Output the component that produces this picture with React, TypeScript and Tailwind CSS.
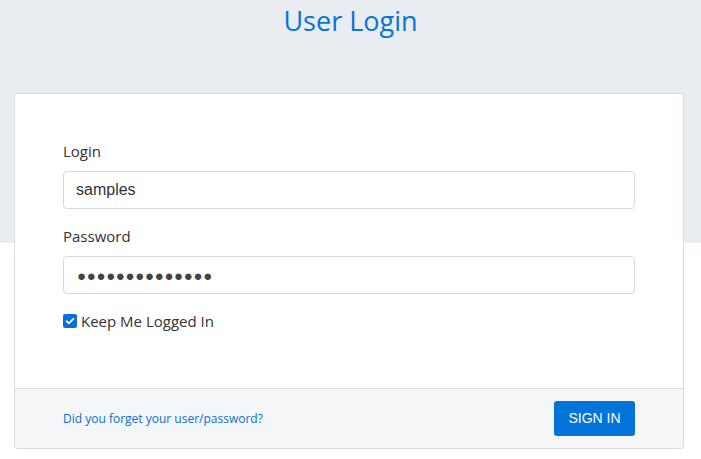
import React from "react";

export default function App() {
  return (
    <div
      className="w-[701px] h-[459px] overflow-hidden bg-[linear-gradient(to_bottom,#e9ecf1_0px,#e9ecf1_243px,#ffffff_243px)]"
      style={{ fontFamily: '"Open Sans", sans-serif' }}
    >
      <h1 className="h-[93px] m-0 text-center text-[27px] leading-[42px] font-medium text-[#0a74da]">
        User Login
      </h1>
      <div className="ml-[14px] w-[670px] h-[356px] flex flex-col bg-white border border-[#d9dde3] rounded-[3px] overflow-hidden">
        <div className="flex-1 px-12 pt-[46px]">
          <div className="mb-[16px]">
            <label className="block text-[15px] leading-[22px] text-[#333] mb-[9px]">Login</label>
            <input
              readOnly
              value="samples"
              className="block w-full h-[38px] px-3 border border-[#d5d8dc] rounded-[4px] text-[16px] text-[#333] outline-none"
              style={{ fontFamily: '"Liberation Sans", Arial, sans-serif' }}
            />
          </div>
          <div className="mb-[16px]">
            <label className="block text-[15px] leading-[22px] text-[#333] mb-[9px]">Password</label>
            <input
              readOnly
              type="text"
              value="●●●●●●●●●●●●●●"
              className="block w-full h-[38px] pl-[13px] pr-3 border border-[#d5d8dc] rounded-[4px] text-[15px] tracking-[0.65px] text-[#444] outline-none"
              style={{ fontFamily: '"Liberation Sans", Arial, sans-serif' }}
            />
          </div>
          <div className="flex items-center gap-[4px]">
            <span className="flex items-center justify-center w-[14px] h-[14px] rounded-[2px] bg-[#0b6ee0]">
              <svg viewBox="0 0 14 14" width="12" height="12" fill="none">
                <path d="M3 7.2l2.6 2.6L11 4.4" stroke="white" strokeWidth="2" strokeLinecap="round" strokeLinejoin="round" />
              </svg>
            </span>
            <span className="text-[15px] leading-[22px] text-[#333]">Keep Me Logged In</span>
          </div>
        </div>
        <div className="h-[60px] flex items-center justify-between px-12 bg-[#f5f6f8] border-t border-[#d9dde3]">
          <a className="text-[12px] text-[#0b6fd4] no-underline cursor-pointer">Did you forget your user/password?</a>
          <button
            className="w-[81px] h-[35px] rounded-[3px] bg-[#0074d9] text-white text-[14px]"
            style={{ fontFamily: '"Liberation Sans", Arial, sans-serif' }}
          >
            SIGN IN
          </button>
        </div>
      </div>
    </div>
  );
}
